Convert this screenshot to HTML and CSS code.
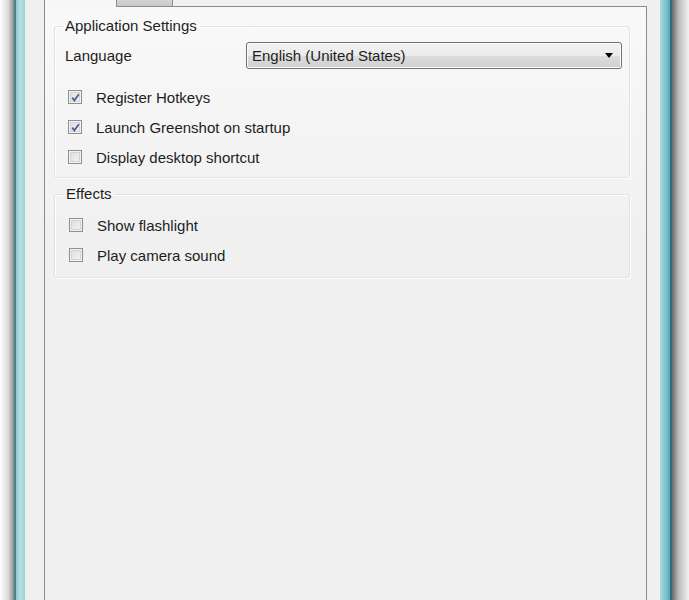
FILE: index.html
```html
<!DOCTYPE html>
<html lang="en">
<head>
    <meta charset="UTF-8">
    <meta name="viewport" content="width=device-width, initial-scale=1.0">
    <title>Greenshot Settings</title>
    <link rel="stylesheet" href="styles.css">
</head>
<body>

<div class="window">
    <div class="shadow shadow-left"></div>
    <div class="frame frame-left"></div>

    <div class="client">
        <!-- Tab strip, cut off at the top -->
        <div class="tabs">
            <div class="tab tab-active"></div>
            <div class="tab"></div>
            <div class="tab-rest"></div>
        </div>

        <div class="tab-panel">
            <!-- Application settings -->
            <fieldset class="group group-app">
                <legend>Application Settings</legend>
                <div class="language-row">
                    <label for="language">Language</label>
                    <div class="combo" id="language">
                        <span>English (United States)</span>
                        <span class="combo-arrow"></span>
                    </div>
                </div>
                <div class="check-row">
                    <span class="checkbox checked"><svg viewBox="0 0 9 9" width="9" height="9"><path d="M1.2 4.6 L3.4 7.4 L7.8 1.2" /></svg></span>
                    <span>Register Hotkeys</span>
                </div>
                <div class="check-row">
                    <span class="checkbox checked"><svg viewBox="0 0 9 9" width="9" height="9"><path d="M1.2 4.6 L3.4 7.4 L7.8 1.2" /></svg></span>
                    <span>Launch Greenshot on startup</span>
                </div>
                <div class="check-row">
                    <span class="checkbox"></span>
                    <span>Display desktop shortcut</span>
                </div>
            </fieldset>

            <!-- Effects -->
            <fieldset class="group group-effects">
                <legend>Effects</legend>
                <div class="check-row">
                    <span class="checkbox"></span>
                    <span>Show flashlight</span>
                </div>
                <div class="check-row">
                    <span class="checkbox"></span>
                    <span>Play camera sound</span>
                </div>
            </fieldset>
        </div>
    </div>

    <div class="frame frame-right"></div>
    <div class="shadow shadow-right"></div>
</div>

</body>
</html>
```

FILE: styles.css
```css
body {
    margin: 0;
    padding: 0;
    background-color: #ffffff;
    font-family: "Liberation Sans", Arial, sans-serif;
    font-size: 15px;
    color: #1e1e1e;
}
.window {
    display: flex;
    height: 600px;
    overflow: hidden;
}
.shadow {
    flex: none;
}
.shadow-left {
    width: 14px;
    background: linear-gradient(to right, #ffffff, #d8d8d8 60%, #8a8a8a);
}
.shadow-right {
    width: 17px;
    background: linear-gradient(to right, #6a6a6a, #bdbdbd 40%, #f2f2f2);
}
.frame {
    flex: none;
}
.frame-left {
    width: 11px;
    border-left: 2px solid #4d7f8c;
    box-sizing: border-box;
    background: linear-gradient(to right, #8fc7cf, #b9e0e4 50%, #9ccfd6);
}
.frame-right {
    width: 12px;
    border-right: 2px solid #2f6c7e;
    box-sizing: border-box;
    background: linear-gradient(to right, #a9d9e0, #80c0cc 60%, #5aa5b6);
}
.client {
    flex: 1;
    background-color: #f0f0f0;
    padding: 0 13px 0 19px;
    display: flex;
    flex-direction: column;
}
.tabs {
    display: flex;
    height: 7px;
    flex: none;
}
.tab {
    box-sizing: border-box;
}
.tab-active {
    width: 73px;
    background-color: #f7f7f7;
    border-left: 1px solid #898c95;
    border-right: 1px solid #898c95;
}
.tab:not(.tab-active) {
    width: 56px;
    background: linear-gradient(#d4d4d4, #c9c9c9);
    border-right: 1px solid #8e8f8f;
    border-bottom: 1px solid #898c95;
}
.tab-rest {
    flex: 1;
    border-bottom: 1px solid #898c95;
}
.tab-panel {
    flex: 1;
    border-left: 1px solid #898c95;
    border-right: 1px solid #898c95;
    padding: 11px 16px 0 9px;
    background: linear-gradient(#f9f9f9, #f0f0f0 40%);
}
.group {
    margin: 0;
    border: 1px solid #dde3e6;
    border-radius: 3px;
    box-shadow: inset 1px 1px 0 #ffffff, 1px 1px 0 #ffffff;
    min-width: 0;
}
.group legend {
    padding: 0 3px 0 2px;
    margin-left: -2px;
    line-height: 16px;
}
.group-app {
    padding: 7px 7px 5px 10px;
}
.group-effects {
    margin-top: 8px;
    padding: 8px 7px 7px 11px;
}
.language-row {
    display: flex;
    align-items: center;
    margin-bottom: 13px;
    padding-top: 1px;
}
.language-row label {
    width: 181px;
    flex: none;
}
.combo {
    flex: 1;
    height: 27px;
    box-sizing: border-box;
    border: 1px solid #707070;
    border-radius: 3px;
    background: linear-gradient(#f2f2f2, #ebebeb 50%, #dddddd 51%, #cfcfcf);
    box-shadow: inset 0 0 0 1px #fcfcfc;
    display: flex;
    align-items: center;
    justify-content: space-between;
    padding: 0 8px 0 5px;
}
.combo-arrow {
    width: 0;
    height: 0;
    border-left: 4px solid transparent;
    border-right: 4px solid transparent;
    border-top: 5px solid #000000;
}
.check-row {
    display: flex;
    align-items: center;
    height: 30px;
    padding-left: 3px;
}
.checkbox {
    width: 14px;
    height: 14px;
    box-sizing: border-box;
    border: 1px solid #8f8f8f;
    background: linear-gradient(135deg, #dcdcdc, #f6f6f6);
    box-shadow: inset 0 0 0 1px #f4f4f4, inset 0 0 0 2px #d3d3d3;
    margin-right: 14px;
    display: flex;
    align-items: center;
    justify-content: center;
}
.checkbox svg {
    fill: none;
    stroke: #4a5f97;
    stroke-width: 1.8;
}
```
